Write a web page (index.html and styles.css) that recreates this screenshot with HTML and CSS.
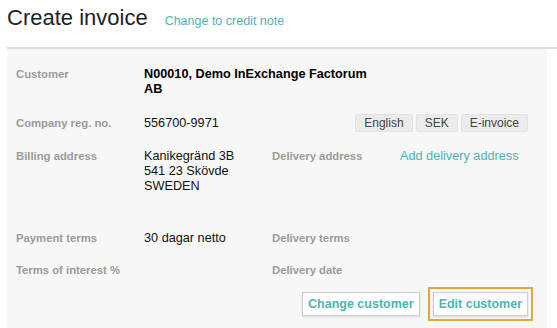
FILE: index.html
```html
<!DOCTYPE html>
<html lang="en">
<head>
    <meta charset="UTF-8">
    <meta name="viewport" content="width=device-width, initial-scale=1.0">
    <title>Create invoice</title>
    <link rel="stylesheet" href="styles.css">
</head>
<body>
    <header class="page-header">
        <h1>Create invoice</h1>
        <a href="#" class="link">Change to credit note</a>
    </header>

    <section class="panel">
        <div class="row">
            <div class="label">Customer</div>
            <div class="value customer-name">N00010, Demo InExchange Factorum AB</div>
        </div>

        <div class="row row-tags">
            <div class="label">Company reg. no.</div>
            <div class="value">556700-9971</div>
            <div class="tags">
                <span class="tag">English</span>
                <span class="tag">SEK</span>
                <span class="tag">E-invoice</span>
            </div>
        </div>

        <div class="row row-address">
            <div class="label">Billing address</div>
            <div class="value">Kanikegränd 3B<br>541 23 Skövde<br>SWEDEN</div>
            <div class="label">Delivery address</div>
            <div class="value"><a href="#" class="link">Add delivery address</a></div>
        </div>

        <div class="row">
            <div class="label">Payment terms</div>
            <div class="value">30 dagar netto</div>
            <div class="label">Delivery terms</div>
            <div class="value"></div>
        </div>

        <div class="row row-last">
            <div class="label">Terms of interest %</div>
            <div class="value"></div>
            <div class="label">Delivery date</div>
            <div class="value"></div>
        </div>

        <div class="actions">
            <button class="btn">Change customer</button>
            <button class="btn btn-focus">Edit customer</button>
        </div>
    </section>
</body>
</html>
```

FILE: styles.css
```css
/* Global Styles */
body {
    font-family: "Liberation Sans", Arial, sans-serif;
    margin: 0;
    padding: 0;
    background-color: #fff;
    color: #111;
}

.link {
    color: #4fb3b3;
    text-decoration: none;
}

/* Header */
.page-header {
    display: flex;
    align-items: baseline;
    margin-left: 7px;
    padding: 5px 0 16px;
    border-bottom: 2px solid #dedede;
}

.page-header h1 {
    margin: 0;
    font-size: 22px;
    font-weight: normal;
    line-height: 26px;
    color: #222;
}

.page-header .link {
    margin-left: 17px;
    font-size: 12.5px;
}

/* Panel */
.panel {
    width: 512px;
    margin-left: 7px;
    padding: 18px 19px 20px 9px;
    background-color: #f7f7f7;
}

.row {
    display: grid;
    grid-template-columns: 128px 128px 128px 128px;
    align-items: start;
    margin-bottom: 17px;
    line-height: 15px;
}

.row-tags {
    align-items: center;
}

.row-address {
    margin-bottom: 37px;
}

.row-last {
    margin-bottom: 14px;
}

.label {
    font-size: 11.3px;
    font-weight: bold;
    color: #9b9b9b;
}

.value {
    font-size: 12.7px;
    color: #111;
}

.customer-name {
    grid-column: 2 / 4;
    max-width: 236px;
    font-weight: bold;
    color: #000;
}

/* Tags */
.tags {
    grid-column: 3 / 5;
    display: flex;
    justify-content: flex-end;
    gap: 3px;
}

.tag {
    display: inline-block;
    height: 16px;
    line-height: 16px;
    padding: 0 8px;
    font-size: 12px;
    color: #444;
    background-color: #ebebeb;
    border: 1px solid #e3e3e3;
    border-radius: 2px;
}

/* Buttons */
.actions {
    display: flex;
    justify-content: flex-end;
    gap: 13px;
}

.btn {
    height: 24px;
    padding: 0 5px;
    font-family: "Liberation Sans", Arial, sans-serif;
    font-size: 12.5px;
    font-weight: bold;
    color: #4fb3b3;
    background-color: #fff;
    border: 1px solid #cfcfcf;
    border-radius: 0;
    box-shadow: 0 1px 2px rgba(0, 0, 0, 0.12);
    cursor: pointer;
}

.btn-focus {
    outline: 2px solid #e3a53d;
    outline-offset: 3px;
}
```
